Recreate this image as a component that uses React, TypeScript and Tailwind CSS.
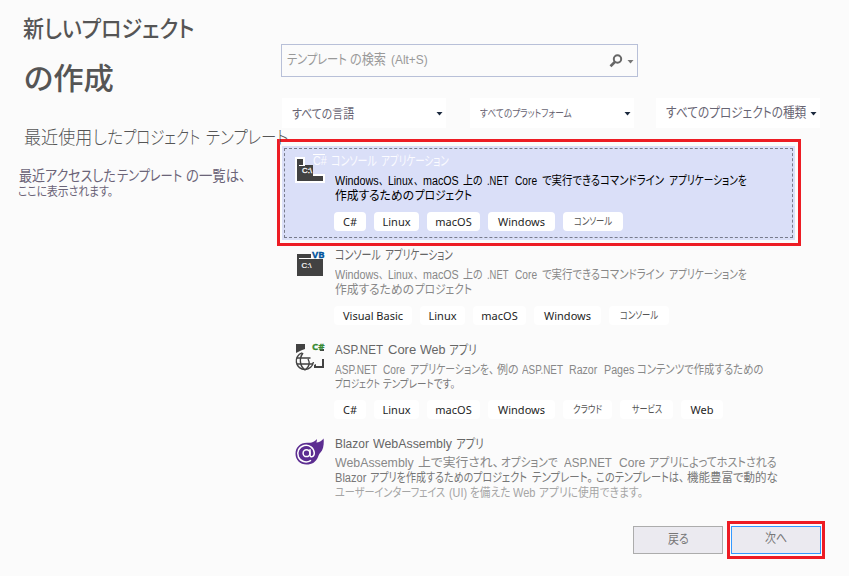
import { useLayoutEffect, useRef } from "react";

type Seg = [text: string, box: string];

/* Condenses or widens its text so that it fills the width of its box. */
function Fit({ text, box }: { text: string; box: string }) {
  const ref = useRef<HTMLSpanElement>(null);
  useLayoutEffect(() => {
    const el = ref.current;
    if (!el || !el.parentElement) return;
    el.style.transform = `scaleX(${el.parentElement.clientWidth / el.offsetWidth})`;
  }, []);
  return (
    <span className={`block shrink-0 whitespace-nowrap ${box}`}>
      <span ref={ref} className="inline-block origin-left [font-feature-settings:'palt']">
        {text}
      </span>
    </span>
  );
}

function Line({ segs, className }: { segs: Seg[]; className: string }) {
  return (
    <div className={`flex ${className}`}>
      {segs.map(([t, b], i) => (
        <Fit key={i} text={t} box={b} />
      ))}
    </div>
  );
}

function Tags({ tags }: { tags: [string, string, string?][] }) {
  return (
    <div className="flex h-[19px] gap-2">
      {tags.map(([t, w, inner]) => (
        <span
          key={t}
          className={`flex shrink-0 items-center justify-center rounded bg-white font-['Noto_Sans','Noto_Sans_CJK_JP',sans-serif] leading-[19px] ${w} ${
            inner ? "text-[10.5px] text-[#555]" : "text-[11px] text-[#1e1e1e]"
          }`}
        >
          {inner ? <Fit text={t} box={inner} /> : t}
        </span>
      ))}
    </div>
  );
}

function Caret({ className = "text-[#1b293e]" }: { className?: string }) {
  return (
    <svg width="7" height="4" viewBox="0 0 7 4" className={`relative top-px shrink-0 ${className}`}>
      <path d="M0.5 0H6.5L3.5 3.6Z" fill="currentColor" />
    </svg>
  );
}

function ConsoleCSharpIcon() {
  return (
    <svg width="32" height="30" viewBox="0 0 32 30" className="overflow-visible">
      <path d="M0 0H10V17H30V26H0Z" fill="#fff" />
      <path d="M2 2H8V8H18V19H28V24H2Z" fill="#424242" />
      <path d="M4 8.5H10" stroke="#fff" />
      <path d="M18 -2.5H30" stroke="#fff" />
      <text x="7" y="16" fontSize="7.5" fontFamily="Liberation Sans, sans-serif" fill="#fff" stroke="#fff" strokeWidth="0.3" textLength="10" lengthAdjust="spacingAndGlyphs">C:\</text>
    </svg>
  );
}

function ConsoleVbIcon() {
  return (
    <svg width="29" height="27" viewBox="0 0 29 27" className="overflow-visible">
      <path d="M0 4H14V8H26V26H0Z" fill="#424242" />
      <path d="M2 8.5H26" stroke="#fff" />
      <text x="4.5" y="18" fontSize="7.5" fontFamily="Liberation Sans, sans-serif" fill="#fff" stroke="#fff" strokeWidth="0.2" textLength="10" lengthAdjust="spacingAndGlyphs">C:\</text>
      <text x="15" y="7.6" fontSize="9.5" fontWeight="700" fontFamily="Noto Sans, sans-serif" fill="#00539c" stroke="#00539c" strokeWidth="0.3" textLength="12.5" lengthAdjust="spacingAndGlyphs">VB</text>
    </svg>
  );
}

function WebIcon() {
  return (
    <svg width="30" height="30" viewBox="0 0 30 30" className="overflow-visible">
      <path d="M1 2H10V7L6 8.5L1 11Z" fill="#424242" />
      <path d="M25 7H29V9H25ZM27 17H29V26H19V23L21 22V24H27Z" fill="#424242" />
      <g fill="none" stroke="#424242" strokeWidth="1.4">
        <path d="M7 10.8A8.6 8.6 0 1 0 18.4 20" />
        <path d="M1.5 16H15.5M1.5 22H18M8 11C4 16 4.5 24 10 28M13 17C15.5 21 14 25.5 10 28" />
      </g>
      <text x="17" y="7.6" fontSize="9.5" fontWeight="700" fontFamily="Noto Sans, sans-serif" fill="#388a34" stroke="#388a34" strokeWidth="0.3" textLength="12.5" lengthAdjust="spacingAndGlyphs">C#</text>
    </svg>
  );
}

function BlazorIcon() {
  return (
    <svg width="30" height="28" viewBox="0 0 30 28" className="overflow-visible">
      <path d="M28.6 0.5C29 4 28.8 9 27 12.5C25 15 24 16 23 19C21 24 17 26.5 11.5 26.5C5 26.5 0.5 22 0.5 15.8C0.5 9.5 5 4.8 12 4.8C17 4.8 19.5 4 22 1C22 2.5 21.7 3.6 21.4 4.6C24 4.4 26.5 3 28.6 0.5Z" fill="#5c2d91" />
      <g fill="none" stroke="#fff" strokeWidth="1.5" strokeLinecap="round">
        <path d="M15.5 22.6A8.3 8.3 0 1 1 19.3 15C19.3 19 15.2 20 15 17V11.8" />
        <circle cx="11.5" cy="15.2" r="3.4" />
      </g>
    </svg>
  );
}

const consoleDesc: Seg[] = [
  ["Windows", "w-[44px]"],
  ["、", "w-[4px]"],
  ["Linux", "ml-[5px] w-[25px]"],
  ["、", "ml-px w-[4px]"],
  ["macOS", "ml-[5px] w-[36px]"],
  ["上の", "ml-[4px] w-[20px]"],
  [".NET", "ml-[4px] w-[21px]"],
  ["Core", "ml-[7px] w-[22px]"],
  ["で実行できるコマンドライン", "ml-[5px] w-[122px]"],
  ["アプリケーションを", "ml-[5px] w-[78px]"],
];
const consoleTitle: Seg[] = [
  ["コンソール", "w-[46px]"],
  ["アプリケーション", "ml-[4px] w-[68px]"],
];
const consoleLine2: Seg[] = [
  ["作成するための", "w-[79px]"],
  ["プロジェクト", "ml-[1px] w-[57px]"],
];
const desc = "h-[15px] text-[12.5px] leading-[15px] text-[#888]";
const osTags: [string, string, string?][] = [
  ["Linux", "w-[45px]"],
  ["macOS", "w-[53px]"],
  ["Windows", "w-[67px]"],
];
const consoleTag: [string, string, string?] = ["コンソール", "w-[60px]", "w-[38px]"];

function Filter({ seg, size, className }: { seg: Seg; size: string; className: string }) {
  return (
    <div className={`flex h-[30px] w-[164px] items-center justify-between bg-white pr-[3px] pl-[10px] text-[#686573] ${className}`}>
      <div className={`pt-px ${size}`}>
        <Fit text={seg[0]} box={seg[1]} />
      </div>
      <Caret />
    </div>
  );
}

export default function App() {
  return (
    <div className="flex h-[576px] w-[849px] overflow-hidden bg-[#fbfbfb] font-['Liberation_Sans','Noto_Sans_CJK_JP',sans-serif]">
      <aside className="relative z-10 w-[277px] shrink-0 pt-[13px] text-[#555]">
        <h1 className="font-medium">
          <Line className="h-8 pl-[23px] text-[23px] leading-8" segs={[["新しいプロジェクト", "w-[171px]"]]} />
          <Line className="mt-[14px] h-10 pl-[24px] text-[30px] leading-10" segs={[["の作成", "w-[90px]"]]} />
        </h1>
        <h2 className="mt-[27px]">
          <Line
            className="h-6 pl-[24px] text-[18.5px] leading-6 font-light text-[#555]"
            segs={[["最近使用した", "w-[99px]"], ["プロジェクト", "w-[77px]"], ["テンプレート", "ml-[6px] w-[82px]"]]}
          />
        </h2>
        <div className="mt-[17px] text-[#6b6478]">
          <Line
            className="h-[19px] pl-[19px] text-[14.5px] leading-[19px]"
            segs={[["最近アクセスした", "w-[97px]"], ["テンプレート", "ml-[1px] w-[65px]"], ["の一覧は、", "ml-[4px] w-[60px]"]]}
          />
          <Line className="-mt-px h-[14px] pl-[18px] text-[12.5px] leading-[14px]" segs={[["ここに表示されます。", "w-[95px]"]]} />
        </div>
      </aside>

      <main className="w-[572px] shrink-0 pt-11">
        <div className="ml-1 flex h-[33px] w-[357px] items-center border border-[#b8c0d8] pl-[5px] text-[#999]">
          <Line
            className="-mt-px h-5 flex-1 text-[13.5px] leading-5 text-[#999]"
            segs={[["テンプレート", "w-[60px]"], ["の検索", "ml-[3px] w-[36px]"], ["(Alt+S)", "ml-[5px] w-[37px]"]]}
          />
          <svg width="14" height="14" viewBox="0 0 14 14" className="mr-1" fill="none" stroke="#666">
            <circle cx="8.5" cy="5" r="3.7" strokeWidth="2" />
            <path d="M5.8 8L1.5 12.2" strokeWidth="2.6" />
          </svg>
          <Caret className="mr-[3px] text-[#777]" />
        </div>

        <div className="mt-[21px] ml-[5px] flex h-[30px]">
          <Filter seg={["すべての言語", "w-[62px]"]} size="text-[13px]" className="" />
          <Filter seg={["すべてのプラットフォーム", "w-[92px]"]} size="text-[10.5px]" className="ml-6" />
          <Filter seg={["すべてのプロジェクトの種類", "w-[140px]"]} size="text-[13.5px]" className="ml-[22px]" />
        </div>

        <section className="mt-[11px] h-[107px] w-[524px] border-[3px] border-[#ed1c24] bg-[#fbfbfb] px-[2px] pt-[4px]">
          <div className="h-[94px] w-[513px] bg-[#dadff8] p-[2px]">
            <div className="flex h-[90px] border border-dashed border-[#777b8c] pl-[10px]">
              <div className="mt-[8px] w-[18px] shrink-0">
                <div className="w-8"><ConsoleCSharpIcon /></div>
              </div>
              <div className="pt-[4px]">
                <Line className="h-4 text-[13px] leading-4 text-[#fbfbff]" segs={[["C#", "w-[14px]"], ["コンソール", "ml-[4px] w-[46px]"], ["アプリケーション", "ml-[4px] w-[68px]"]]} />
                <div className="mt-[5px] pl-[22px]">
                  <Line className="h-[15px] text-[12.5px] leading-[15px] text-black" segs={consoleDesc} />
                  <Line className="h-[15px] text-[12.5px] leading-[15px] text-black" segs={consoleLine2} />
                </div>
                <div className="mt-[8px] pl-[21px]">
                  <Tags tags={[["C#", "w-8"], ...osTags, consoleTag]} />
                </div>
              </div>
            </div>
          </div>
        </section>

        <section className="flex h-[94px] pt-px pl-5">
          <div className="mt-[3px] w-[38px] shrink-0"><ConsoleVbIcon /></div>
          <div>
            <Line className="h-4 text-[13px] leading-4 text-[#666]" segs={consoleTitle} />
            <div className="mt-[5px]">
              <Line className={desc} segs={consoleDesc} />
              <Line className={desc} segs={consoleLine2} />
            </div>
            <div className="mt-[8px] -ml-px">
              <Tags tags={[["Visual Basic", "w-[78px]"], ...osTags, consoleTag]} />
            </div>
          </div>
        </section>

        <section className="flex h-[94px] pt-[2px] pl-[18px]">
          <div className="w-[40px] shrink-0"><WebIcon /></div>
          <div>
            <Line className="h-4 text-[13px] leading-4 text-[#666]" segs={[["ASP.NET", "w-[48px]"], ["Core", "ml-[5px] w-[28px]"], ["Web", "ml-[4px] w-[26px]"], ["アプリ", "ml-[3px] w-[28px]"]]} />
            <div className="mt-[5px]">
              <Line
                className={desc}
                segs={[
                  ["ASP.NET", "w-[42px]"],
                  ["Core", "ml-[6px] w-[22px]"],
                  ["アプリケーションを、", "ml-[5px] w-[84px]"],
                  ["例の", "ml-[3px] w-[22px]"],
                  ["ASP.NET", "ml-[3px] w-[41px]"],
                  ["Razor", "ml-[6px] w-[28px]"],
                  ["Pages", "ml-[7px] w-[30px]"],
                  ["コンテンツで作成するための", "ml-[3px] w-[126px]"],
                ]}
              />
              <Line className="h-[15px] text-[11px] leading-[13px] text-[#777]" segs={[["プロジェクト", "w-[45px]"], ["テンプレートです。", "ml-[3px] w-[72px]"]]} />
            </div>
            <div className="mt-[7px] -ml-px">
              <Tags tags={[["C#", "w-8"], ...osTags, ["クラウド", "w-[49px]", "w-[29px]"], ["サービス", "w-[53px]", "w-[30px]"], ["Web", "w-[42px]"]]} />
            </div>
          </div>
        </section>

        <section className="flex h-[92px] pt-[2px] pl-[18px]">
          <div className="mt-[2px] w-[40px] shrink-0"><BlazorIcon /></div>
          <div>
            <Line className="h-4 text-[13px] leading-4 text-[#666]" segs={[["Blazor", "w-[34px]"], ["WebAssembly", "ml-[4px] w-[79px]"], ["アプリ", "ml-[4px] w-[28px]"]]} />
            <div className="mt-[4px]">
              <Line
                className={desc}
                segs={[
                  ["WebAssembly", "w-[79px]"],
                  ["上で実行され、", "ml-[4px] w-[81px]"],
                  ["オプションで", "ml-[2px] w-[57px]"],
                  ["ASP.NET", "ml-[6px] w-[48px]"],
                  ["Core", "ml-[7px] w-[26px]"],
                  ["アプリによってホストされる", "ml-[4px] w-[128px]"],
                ]}
              />
              <Line
                className="h-[15px] text-[12.5px] leading-[15px] text-[#777]"
                segs={[
                  ["Blazor", "w-[31px]"],
                  ["アプリを作成するためのプロジェクト", "ml-[4px] w-[157px]"],
                  ["テンプレート。", "ml-[5px] w-[61px]"],
                  ["このテンプレートは、", "ml-[3px] w-[88px]"],
                  ["機能豊富で動的な", "ml-[3px] w-[91px]"],
                ]}
              />
              <Line
                className="h-[15px] text-[12px] leading-[14px] text-[#a5a5a5]"
                segs={[
                  ["ユーザーインターフェイス", "w-[110px]"],
                  ["(UI)", "ml-[4px] w-[18px]"],
                  ["を備えた", "ml-[3px] w-[40px]"],
                  ["Web", "ml-[3px] w-[22px]"],
                  ["アプリに使用できます。", "ml-[4px] w-[104px]"],
                ]}
              />
            </div>
          </div>
        </section>

        <footer className="-mt-[5px] flex h-[38px] items-center pl-[356px] text-[13px] text-[#777]">
          <button className="flex h-[28px] w-[90px] items-center justify-center border border-[#acacac] bg-[#ebeaf0] pb-[3px]">
            <Fit text="戻る" box="w-[21px]" />
          </button>
          <div className="ml-[4px] h-[38px] w-[98px] border-[3px] border-[#ed1c24] px-px pt-[2px]">
            <button className="flex h-[28px] w-[90px] items-center justify-center border border-[#3399ff] bg-[#ebeaf0] pb-[4px]">
              <Fit text="次へ" box="w-[22px]" />
            </button>
          </div>
        </footer>
      </main>
    </div>
  );
}
